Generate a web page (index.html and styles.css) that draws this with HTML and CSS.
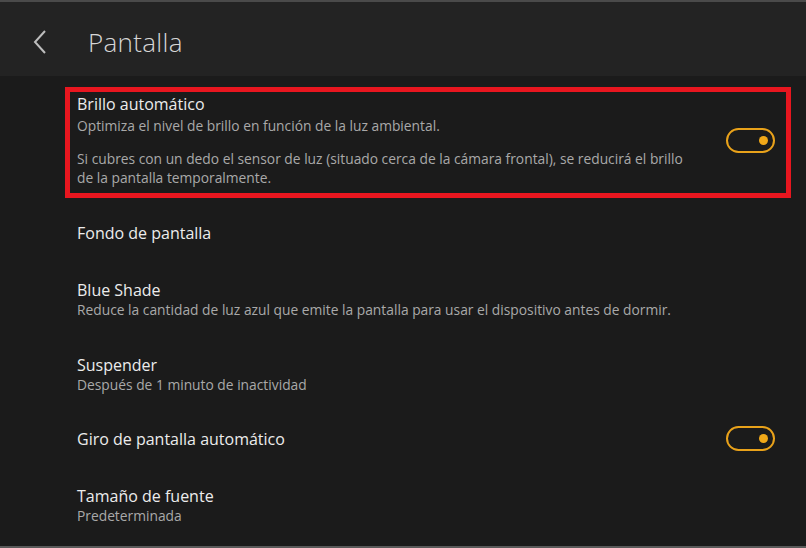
FILE: index.html
```html
<!DOCTYPE html>
<html lang="es">
<head>
<meta charset="utf-8">
<title>Pantalla</title>
<link rel="stylesheet" href="styles.css">
</head>
<body>
<div class="screen">
  <header class="topbar">
    <svg class="back" width="16" height="26" viewBox="0 0 16 26"><path d="M13 2 L3 13 L13 24" fill="none" stroke="#bdbdbd" stroke-width="2"/></svg>
    <h1 class="title">Pantalla</h1>
  </header>
  <main class="list">
    <div class="row highlighted">
      <div class="text">
        <div class="label">Brillo automático</div>
        <p class="sub first">Optimiza el nivel de brillo en función de la luz ambiental.</p>
        <p class="sub para">Si cubres con un dedo el sensor de luz (situado cerca de la cámara frontal), se reducirá el brillo de la pantalla temporalmente.</p>
      </div>
      <span class="toggle"><span class="dot"></span></span>
      <span class="mark"></span>
    </div>
    <div class="row single">
      <div class="text"><div class="label">Fondo de pantalla</div></div>
    </div>
    <div class="row">
      <div class="text">
        <div class="label">Blue Shade</div>
        <p class="sub">Reduce la cantidad de luz azul que emite la pantalla para usar el dispositivo antes de dormir.</p>
      </div>
    </div>
    <div class="row">
      <div class="text">
        <div class="label">Suspender</div>
        <p class="sub">Después de 1 minuto de inactividad</p>
      </div>
    </div>
    <div class="row single">
      <div class="text"><div class="label">Giro de pantalla automático</div></div>
      <span class="toggle"><span class="dot"></span></span>
    </div>
    <div class="row">
      <div class="text">
        <div class="label">Tamaño de fuente</div>
        <p class="sub">Predeterminada</p>
      </div>
    </div>
  </main>
</div>
</body>
</html>
```
FILE: styles.css
```css
* { box-sizing: border-box; }
html, body { margin: 0; padding: 0; background: #1b1b1b; }
body { font-family: "Open Sans", "Noto Sans", sans-serif; color: #e6e6e6; }
.screen {
  width: 806px; height: 548px; overflow: hidden;
  border-top: 2px solid #4a4a4a;
  border-bottom: 2px solid #5a5a5a;
  background: #1b1b1b;
  display: flex; flex-direction: column;
}
.topbar {
  flex: none;
  height: 74px; background: #232323;
  display: flex; align-items: center;
  padding: 6px 0 0 32px;
}
.back { display: block; }
.title {
  margin: 0 0 0 40px; font-weight: 300; font-size: 26px; line-height: 30px; color: #d6d6d6; letter-spacing: 0.3px;
}
.list { display: flex; flex-direction: column; flex: none; }
.row {
  position: relative;
  display: flex; align-items: center;
  padding: 19px 31px 17px 77px;
}
.row.highlighted { padding: 18px 31px 18px 77px; }
.row.single { padding-top: 18px; padding-bottom: 18px; }
.text { flex: 1; }
.label { font-size: 16px; line-height: 20px; color: #ececec; }
.sub { margin: 1px 0 0; font-size: 13.8px; line-height: 18px; color: #a9a9a9; max-width: 615px; }
.sub.first { margin-top: 3px; }
.sub.para { margin-top: 14px; }
.sub.para { line-height: 19px; }
.toggle {
  width: 49px; height: 25px; margin: -3px 0 -2px; border: 2px solid #e9a21a; border-radius: 13px;
  display: flex; align-items: center; justify-content: flex-end; padding-right: 5px;
  flex: none;
}
.dot { width: 9px; height: 9px; border-radius: 50%; background: #f0a818; }
.mark {
  position: absolute; left: 65px; right: 15px; top: 11px; bottom: 7px;
  border: 5px solid #e8161f;
}
```
